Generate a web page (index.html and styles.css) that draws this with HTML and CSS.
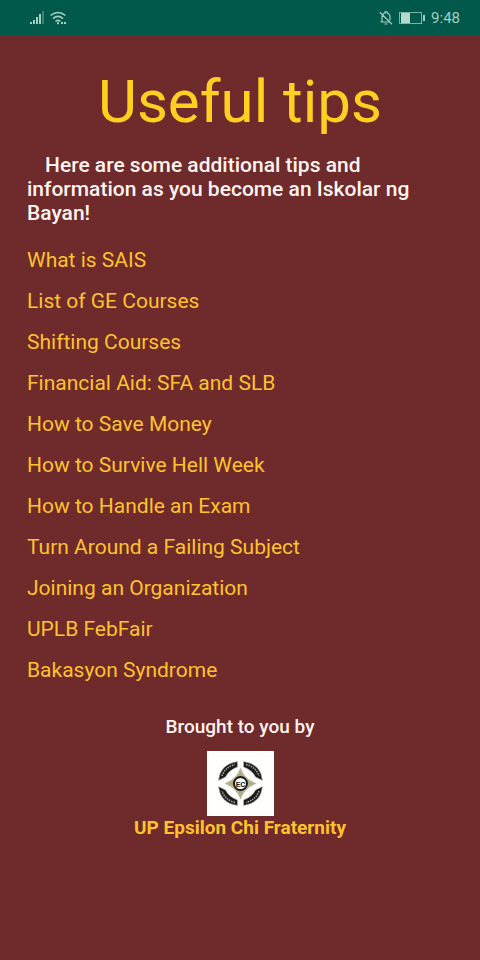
FILE: index.html
```
<!DOCTYPE html>
<html lang="en">
<head>
    <meta charset="UTF-8">
    <meta name="viewport" content="width=device-width, initial-scale=1.0">
    <title>Useful tips</title>
    <link rel="stylesheet" href="styles.css">
</head>
<body>
    <header class="status">
        <div class="status-left">
            <!-- signal -->
            <svg width="16" height="14" viewBox="0 0 16 14" fill="#a5cdc2">
                <rect x="0" y="11" width="2" height="2"/>
                <rect x="3" y="9" width="2" height="4"/>
                <rect x="6" y="6" width="2" height="7"/>
                <rect x="9" y="3" width="2" height="10"/>
                <rect x="12" y="0" width="2" height="13" opacity=".35"/>
            </svg>
            <!-- wifi -->
            <svg width="18" height="14" viewBox="0 0 18 14" fill="none" stroke="#a5cdc2" stroke-width="1.6">
                <path d="M.5 4.500Q8 -1.500 15.500 4.500"/>
                <path d="M3 7.700Q8 3.200 13 7.700"/>
                <path d="M5.500 10.500Q8 8.300 10.500 10.500"/>
                <path d="M7 12.200h2M11 12h2M14 12h2" stroke-width="2"/>
            </svg>
        </div>
        <div class="status-right">
            <!-- muted bell -->
            <svg width="14" height="14" viewBox="0 0 14 14" fill="none" stroke="#a5cdc2" stroke-width="1.2">
                <path d="M3 11V6.500Q3 2.500 6 2V.8h2V2Q11 2.500 11 6.500V9.500M1.500 11H10.500M5.500 13h3M.8 1.200L13 13.200"/>
            </svg>
            <!-- battery -->
            <svg width="26" height="12" viewBox="0 0 26 12">
                <rect x=".5" y=".5" width="22" height="11" fill="none" stroke="#7fb3a6"/>
                <rect x="2" y="1" width="9" height="10" fill="#b5d8ce"/>
                <rect x="24" y="3" width="2" height="6" fill="#a5cdc2"/>
            </svg>
            <span class="clock">9:48</span>
        </div>
    </header>
    <main>
        <h1>Useful tips</h1>
        <p class="intro">Here are some additional tips and information as you become an Iskolar ng Bayan!</p>
        <ul class="tips">
            <li><a href="#">What is SAIS</a></li>
            <li><a href="#">List of GE Courses</a></li>
            <li><a href="#">Shifting Courses</a></li>
            <li><a href="#">Financial Aid: SFA and SLB</a></li>
            <li><a href="#">How to Save Money</a></li>
            <li><a href="#">How to Survive Hell Week</a></li>
            <li><a href="#">How to Handle an Exam</a></li>
            <li><a href="#">Turn Around a Failing Subject</a></li>
            <li><a href="#">Joining an Organization</a></li>
            <li><a href="#">UPLB FebFair</a></li>
            <li><a href="#">Bakasyon Syndrome</a></li>
        </ul>
    </main>
    <footer>
        <p>Brought to you by</p>
        <svg class="logo" viewBox="0 0 67 65">
            <rect width="67" height="65" fill="#fffefc"/>
            <!-- ring cut in four -->
            <g fill="#1c1b1b" stroke="#bdbdb8" stroke-width=".6">
                <path d="M11.500 29.500Q13 13 30.500 10.500L30.500 16Q22 19 18.500 26Z"/>
                <path d="M55.500 29.500Q54 13 36.500 10.500L36.500 16Q45 19 48.500 26Z"/>
                <path d="M55.500 35.500Q54 52 36.500 54.500L36.500 49Q45 46 48.500 39Z"/>
                <path d="M11.500 35.500Q13 52 30.500 54.500L30.500 49Q22 46 18.500 39Z"/>
            </g>
            <!-- lettering on the ring -->
            <g fill="none" stroke="#a9a9a4" stroke-width="1.500" stroke-dasharray="1.500 1">
                <path d="M15 25Q18 16 28 13.500"/>
                <path d="M39 13.500Q49 16 52 25"/>
                <path d="M52 40Q49 49 39 51.500"/>
                <path d="M28 51.500Q18 49 15 40"/>
            </g>
            <path d="M33.500 19Q37 28 47 32.500Q37 37 33.500 46Q30 37 20 32.500Q30 28 33.500 19Z" fill="#aaa583" stroke="#b7b293" stroke-width="2"/>
            <circle cx="33.500" cy="32.500" r="6.500" fill="#fff" stroke="#1c1b1b" stroke-width="2"/>
            <text x="33.500" y="35.500" class="logo-text">EC</text>
        </svg>
        <a href="#">UP Epsilon Chi Fraternity</a>
    </footer>
</body>
</html>
```
FILE: styles.css
```
*{
    box-sizing: border-box;
}
body{
    margin: 0;
    min-height: 100vh;
    background: #6f2a2b;
    color: #fff4f0;
    font-family: Roboto, "Liberation Sans", sans-serif;
}
.status{
    display: flex;
    justify-content: space-between;
    align-items: center;
    height: 35px;
    padding: 0 20px 0 30px;
    background: #00594b;
    color: #a5cdc2;
}
.status-left, .status-right{
    display: flex;
    align-items: center;
    gap: 4px;
}
.status-right{
    gap: 6px;
}
.clock{
    font-size: 15px;
}
main{
    padding: 33px 27px 0;
}
h1{
    margin: 0;
    font-size: 60px;
    line-height: 68px;
    font-weight: 400;
    text-align: center;
    color: #ffd01f;
}
.intro{
    margin: 17px 0 0;
    font-size: 21px;
    line-height: 24px;
    font-weight: 500;
    text-indent: 18px;
}
.tips{
    margin: 15px 0 0;
    padding: 0;
    list-style: none;
}
.tips li{
    line-height: 41px;
    font-size: 21px;
}
a{
    color: #fdc22e;
    text-decoration: none;
}
footer{
    display: flex;
    flex-direction: column;
    align-items: center;
    padding-top: 24px;
    font-size: 19px;
    line-height: 24px;
    font-weight: 500;
}
footer p{
    margin: 0 0 12px;
}
footer a{
    font-weight: 700;
}
.logo{
    width: 67px;
    height: 65px;
}
.logo-text{
    font-size: 8px;
    font-weight: 700;
    text-anchor: middle;
    fill: #1c1b1b;
}
```
